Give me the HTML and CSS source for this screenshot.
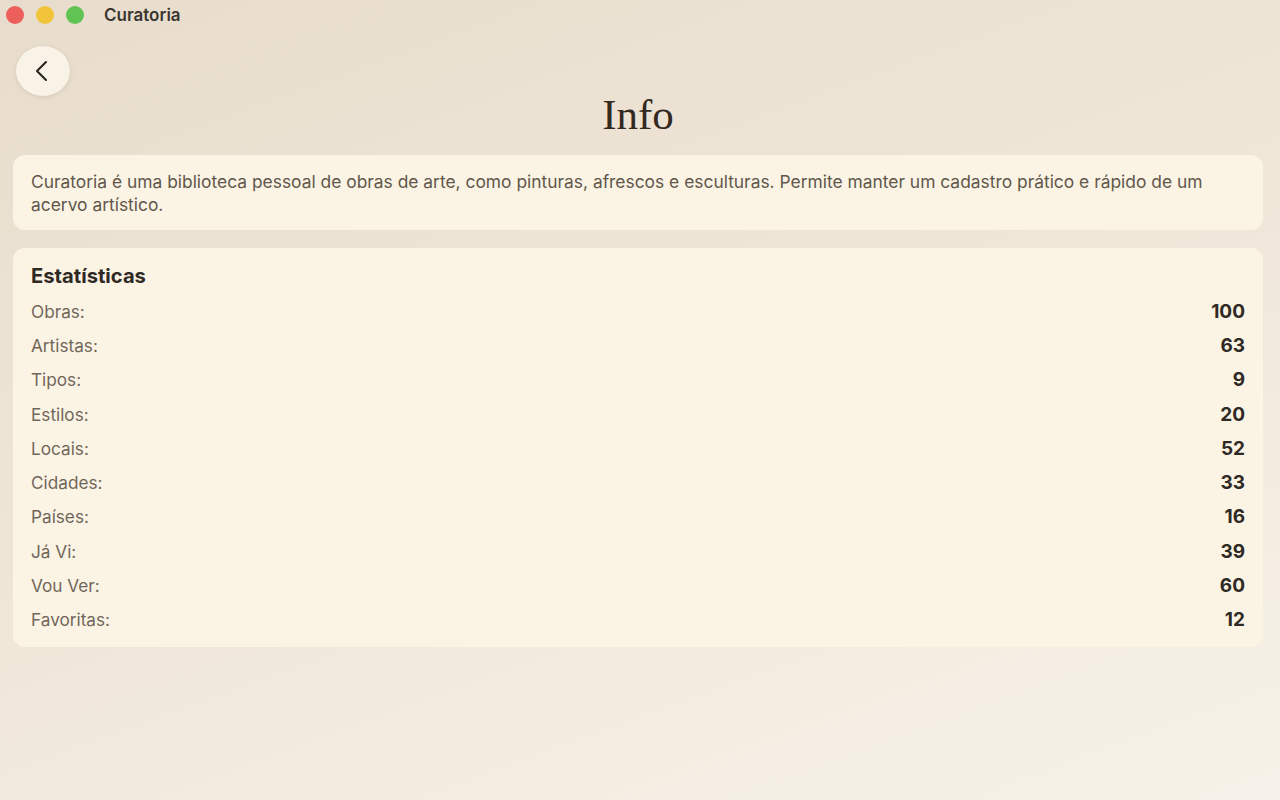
FILE: index.html
```html
<!DOCTYPE html>
<html lang="pt">
<head>
<meta charset="utf-8">
<title>Curatoria</title>
<link rel="stylesheet" href="styles.css">
</head>
<body>
<div class="window">
  <header class="titlebar">
    <div class="lights">
      <span class="light red"></span>
      <span class="light yellow"></span>
      <span class="light green"></span>
    </div>
    <span class="app-name">Curatoria</span>
  </header>
  <div class="toolbar">
    <button class="back" aria-label="Voltar">
      <svg width="22" height="22" viewBox="0 0 22 22"><path d="M15 2 L6 11 L15 20" fill="none" stroke="#2a241f" stroke-width="2.1" stroke-linecap="round" stroke-linejoin="round"/></svg>
    </button>
  </div>
  <h1 class="title">Info</h1>
  <section class="card about">
    <p>Curatoria é uma biblioteca pessoal de obras de arte, como pinturas, afrescos e esculturas. Permite manter um cadastro prático e rápido de um acervo artístico.</p>
  </section>
  <section class="card stats">
    <h2>Estatísticas</h2>
    <ul class="rows">
      <li><span class="label">Obras:</span><span class="value">100</span></li>
      <li><span class="label">Artistas:</span><span class="value">63</span></li>
      <li><span class="label">Tipos:</span><span class="value">9</span></li>
      <li><span class="label">Estilos:</span><span class="value">20</span></li>
      <li><span class="label">Locais:</span><span class="value">52</span></li>
      <li><span class="label">Cidades:</span><span class="value">33</span></li>
      <li><span class="label">Países:</span><span class="value">16</span></li>
      <li><span class="label">Já Vi:</span><span class="value">39</span></li>
      <li><span class="label">Vou Ver:</span><span class="value">60</span></li>
      <li><span class="label">Favoritas:</span><span class="value">12</span></li>
    </ul>
  </section>
</div>
</body>
</html>
```
FILE: styles.css
```css
* { box-sizing: border-box; }
html, body { margin: 0; padding: 0; }
body {
  width: 1280px;
  height: 800px;
  overflow: hidden;
  font-family: Inter, "Open Sans", "Liberation Sans", sans-serif;
  background: linear-gradient(160deg, #e8ddcc 0%, #efe5d7 45%, #f6f2e9 100%);
  color: #2f2924;
}
.window {
  display: flex;
  flex-direction: column;
  padding: 0 17px 0 13px;
}
.titlebar {
  height: 29px;
  display: flex;
  align-items: center;
  margin-left: -13px;
  padding-left: 6px;
}
.lights { display: flex; gap: 12px; }
.light {
  width: 18px; height: 18px; border-radius: 50%;
  display: block;
}
.red { background: #ec5f5b; }
.yellow { background: #f2c43a; }
.green { background: #5fc454; }
.app-name {
  margin-left: 20px;
  font-size: 17px;
  font-weight: 600;
  color: #3b3530;
}
.toolbar {
  padding-top: 17px;
  padding-left: 3px;
}
.back {
  width: 54px; height: 50px;
  border: none;
  border-radius: 50%;
  background: #f8f2e7;
  box-shadow: 0 1px 4px rgba(120, 95, 60, 0.18);
  display: flex; align-items: center; justify-content: center;
  padding: 0;
  padding-right: 2px;
}
.title {
  margin: -5px 0 0;
  text-align: center;
  font-family: "Liberation Serif", "Times New Roman", serif;
  font-weight: 400;
  font-size: 43px;
  line-height: 48px;
  color: #33291f;
}
.card {
  background: #fbf4e5;
  border-radius: 12px;
  padding: 0 18px;
}
.about {
  margin-top: 16px;
  padding-top: 15px;
  padding-bottom: 14px;
}
.about p {
  margin: 0;
  font-size: 17.4px;
  line-height: 23px;
  color: #62574b;
}
.stats {
  margin-top: 18px;
  padding-top: 15px;
  padding-bottom: 10px;
}
.stats h2 {
  margin: 0;
  font-size: 20.2px;
  font-weight: 700;
  line-height: 26px;
  color: #2f2924;
}
.rows {
  list-style: none;
  margin: 5px 0 0;
  padding: 0;
}
.rows li {
  display: flex;
  justify-content: space-between;
  align-items: center;
  height: 34.3px;
  font-size: 17.2px;
}
.label { color: #71665a; }
.value { font-weight: 700; font-size: 19px; color: #2f2924; }
```
